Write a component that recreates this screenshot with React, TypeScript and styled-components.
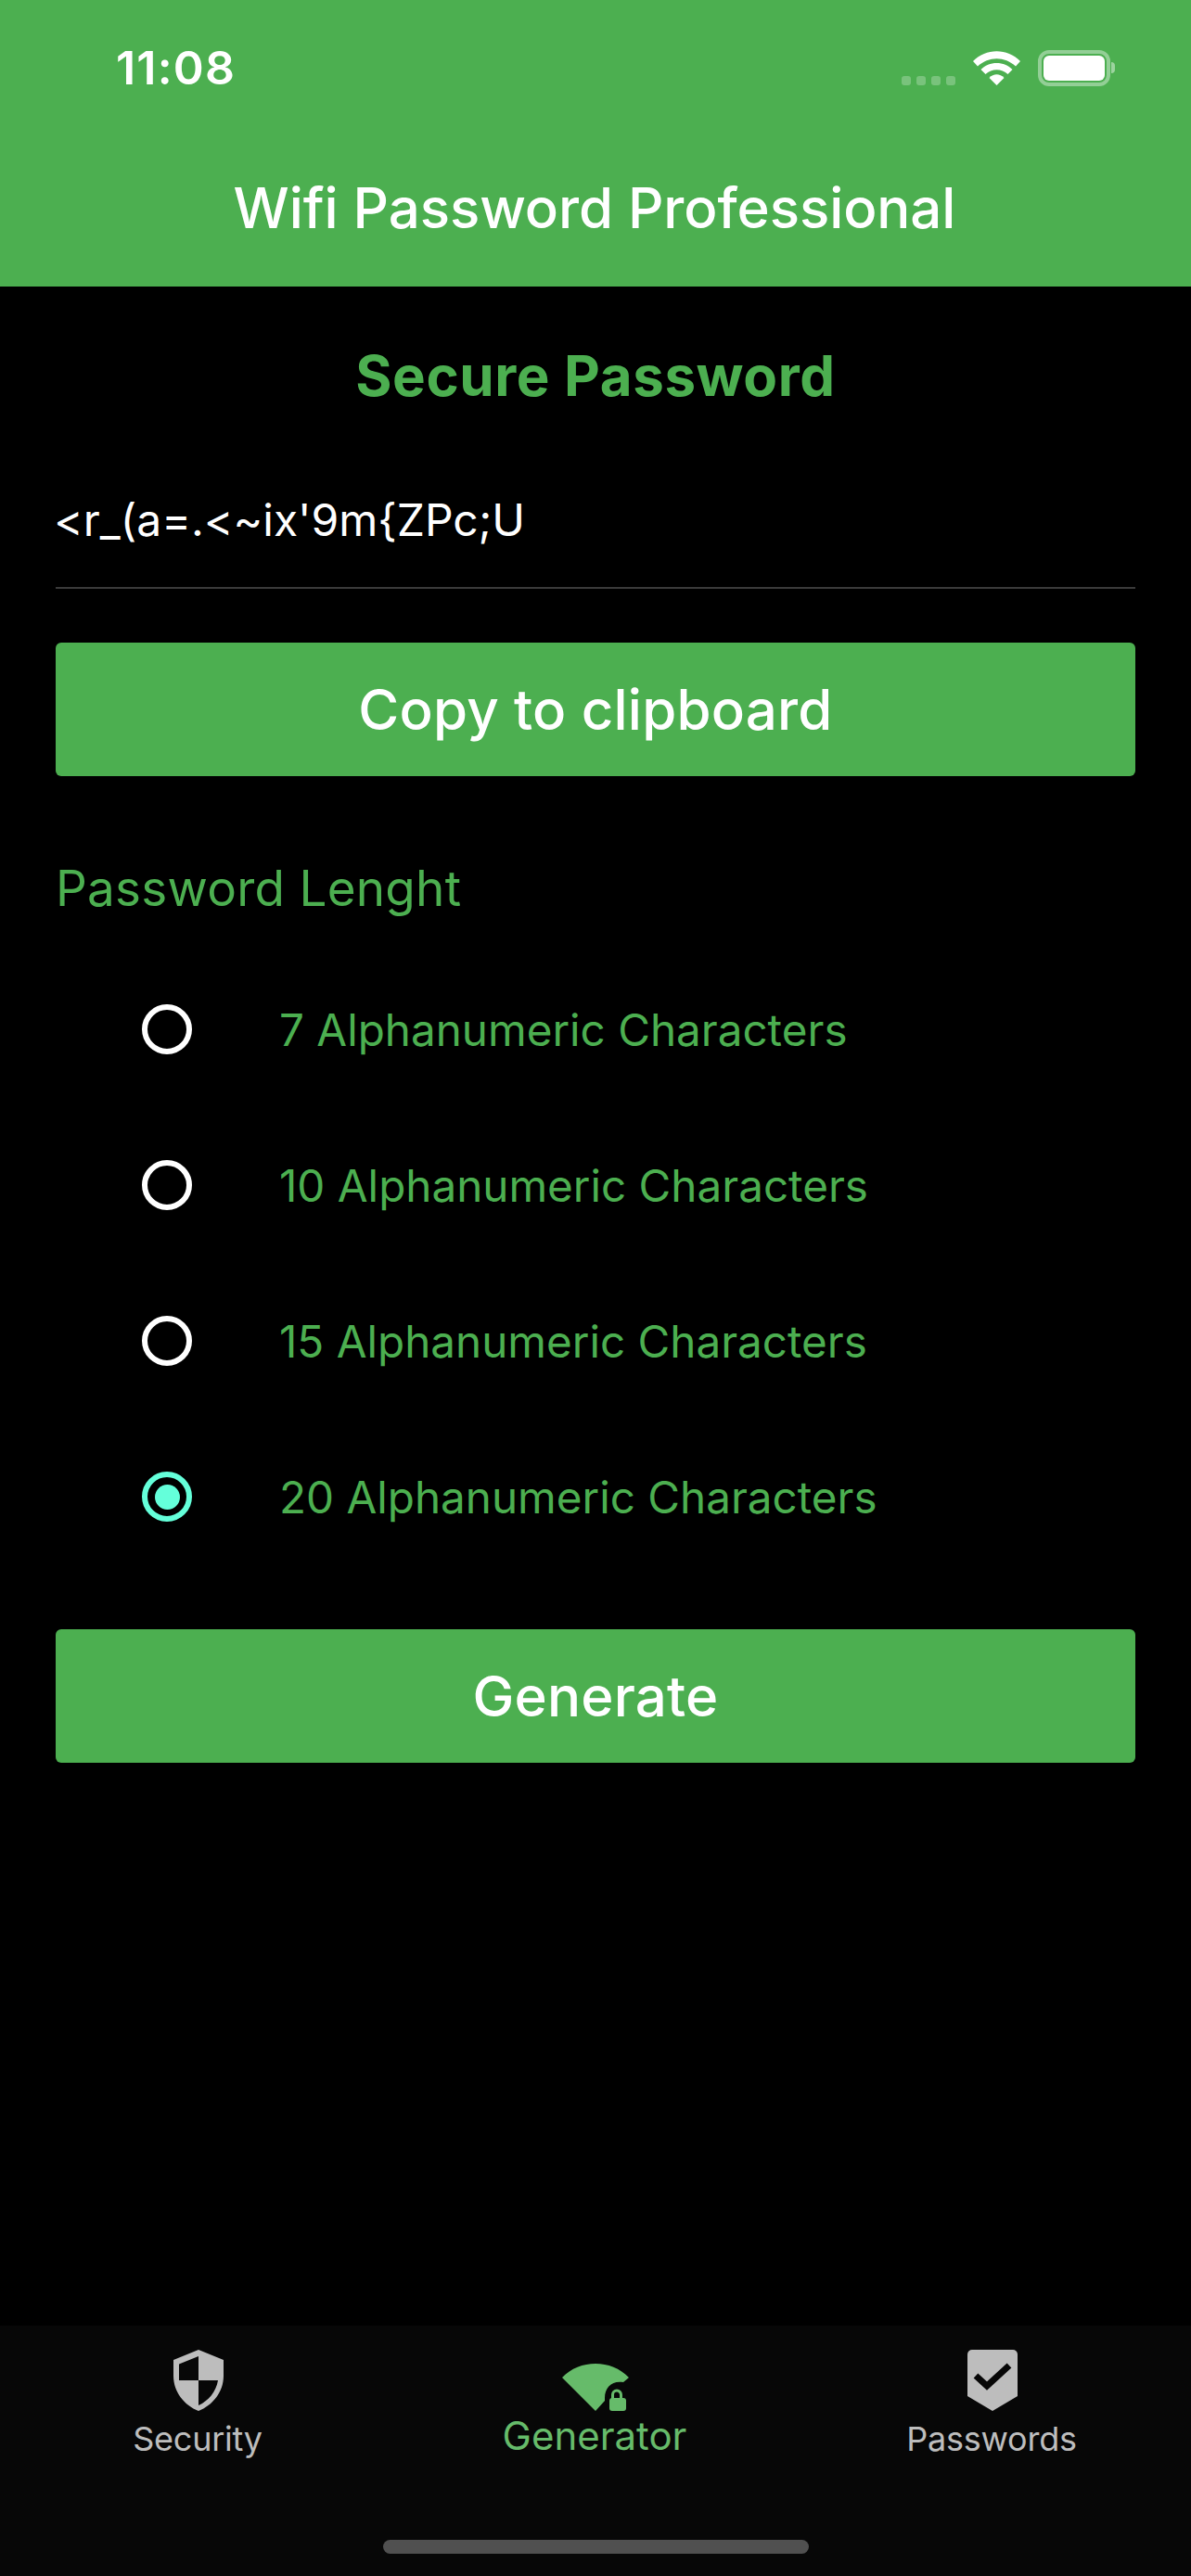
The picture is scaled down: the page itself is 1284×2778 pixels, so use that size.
import React from "react";
import styled, { createGlobalStyle } from "styled-components";

const Global = createGlobalStyle`
  html, body { margin: 0; padding: 0; background: #000; }
  * { box-sizing: border-box; }
  body { font-family: Inter, "Liberation Sans", sans-serif; }
`;

const Page = styled.div`
  width: 1284px;
  height: 2778px;
  background: #000;
  display: flex;
  flex-direction: column;
  overflow: hidden;
`;

const Header = styled.header`
  height: 309px;
  flex: none;
  background: #4caf50;
  display: flex;
  flex-direction: column;
  color: #fff;
`;

const StatusBar = styled.div`
  height: 146px;
  display: flex;
  align-items: center;
  justify-content: space-between;
  padding: 0 82px 0 125px;
`;

const Time = styled.span`
  font-size: 50px;
  font-weight: 600;
  line-height: 1;
  letter-spacing: 1.2px;
`;

const StatusIcons = styled.div`
  display: flex;
  align-items: center;
  position: relative;
`;

const Signal = styled.div`
  display: flex;
  gap: 6px;
  align-self: flex-end;
  margin: 0 19px 1px 0;
`;

const SignalDot = styled.i`
  width: 10px;
  height: 10px;
  border-radius: 3px;
  background: rgba(255, 255, 255, 0.25);
`;

const Battery = styled.div`
  width: 78px;
  height: 39px;
  margin-left: 19px;
  border: 4px solid rgba(255, 255, 255, 0.4);
  border-radius: 12px;
  padding: 2px;
  display: flex;
`;

const BatteryFill = styled.div`
  flex: 1;
  background: #fff;
  border-radius: 6px;
`;

const BatteryTip = styled.div`
  width: 4px;
  height: 12px;
  margin-left: 1px;
  background: rgba(255, 255, 255, 0.45);
  border-radius: 0 4px 4px 0;
`;

const HeaderTitle = styled.h1`
  margin: 0;
  height: 156px;
  padding-right: 2px;
  display: flex;
  align-items: center;
  justify-content: center;
  font-size: 60px;
  font-weight: 500;
  line-height: 1;
  letter-spacing: -0.08px;
`;

const Content = styled.main`
  flex: 1;
  padding: 0 60px;
  display: flex;
  flex-direction: column;
`;

const SectionTitle = styled.h2`
  margin: 0;
  height: 150px;
  padding-top: 41px;
  display: flex;
  align-items: center;
  justify-content: center;
  color: #4caf50;
  font-size: 60px;
  font-weight: 700;
  line-height: 1;
  letter-spacing: 0.6px;
`;

const PasswordField = styled.div`
  height: 176px;
  padding-top: 59px;
  border-bottom: 2px solid #3a3a3a;
  color: #fff;
  font-size: 48px;
  line-height: 86px;
  text-indent: -2px;
`;

const ActionButton = styled.button`
  display: block;
  width: 100%;
  height: 144px;
  border: 0;
  padding: 0;
  border-radius: 6px;
  background: #4caf50;
  color: #fff;
  font-family: inherit;
  font-size: 60px;
  font-weight: 500;
  line-height: 1;
  letter-spacing: 0.2px;
`;

const CopyButton = styled(ActionButton)`
  margin-top: 58px;
`;

const GenerateButton = styled(ActionButton)`
  margin-top: 59px;
`;

const LengthLabel = styled.div`
  margin-top: 88px;
  height: 66px;
  display: flex;
  align-items: center;
  color: #4caf50;
  font-size: 53px;
  line-height: 1;
  letter-spacing: 0.25px;
`;

const Options = styled.div`
  margin-top: 35px;
  display: flex;
  flex-direction: column;
`;

const Option = styled.label`
  height: 168px;
  display: flex;
  align-items: center;
  color: #4caf50;
  font-size: 47.6px;
  padding-left: 93px;
`;

const Radio = styled.span<{ $on?: boolean }>`
  width: 54px;
  height: 54px;
  flex: none;
  margin-right: 94px;
  border-radius: 50%;
  border: 6px solid ${(p) => (p.$on ? "#64ffda" : "#fff")};
  display: flex;
  align-items: center;
  justify-content: center;
`;

const RadioDot = styled.span`
  width: 27px;
  height: 27px;
  border-radius: 50%;
  background: #64ffda;
`;

const TabBar = styled.nav`
  height: 270px;
  flex: none;
  background: #070707;
  position: relative;
  display: grid;
  grid-template-columns: repeat(3, 1fr);
`;

const Tab = styled.div<{ $active?: boolean }>`
  display: flex;
  flex-direction: column;
  align-items: center;
  color: ${(p) => (p.$active ? "#66bb6a" : "#bdbdbd")};
`;

const TabIconSlot = styled.div`
  height: 66px;
  margin-top: 26px;
  display: flex;
  align-items: flex-end;
  justify-content: center;
`;

const TabLabel = styled.span<{ $active?: boolean }>`
  margin-top: ${(p) => (p.$active ? "3px" : "6px")};
  padding-right: 2px;
  font-size: ${(p) => (p.$active ? "42px" : "36px")};
  letter-spacing: ${(p) => (p.$active ? "0" : "-0.25px")};
  line-height: 48px;
`;

const HomeBar = styled.div`
  position: absolute;
  left: 413px;
  bottom: 24px;
  width: 459px;
  height: 15px;
  border-radius: 8px;
  background: #505050;
`;

const options = [
  "7 Alphanumeric Characters",
  "10 Alphanumeric Characters",
  "15 Alphanumeric Characters",
  "20 Alphanumeric Characters",
];

export default function App() {
  return (
    <Page>
      <Global />
      <Header>
        <StatusBar>
          <Time>11:08</Time>
          <StatusIcons>
            <Signal>
              <SignalDot />
              <SignalDot />
              <SignalDot />
              <SignalDot />
            </Signal>
            <svg width="51" height="37" viewBox="0 0 51 37" fill="#fff">
              <path d="M0 11C14-3.5 37-3.5 51 11L46 16.5C34 5.5 17 5.5 5 16.5Z" />
              <path d="M8.5 20C17 10.5 34 10.5 42.5 20L37.5 25C31 18.5 20 18.5 13.5 25Z" />
              <path d="M17.5 29C22 24 29 24 33.5 29L25.5 37Z" />
            </svg>
            <Battery>
              <BatteryFill />
            </Battery>
            <BatteryTip />
          </StatusIcons>
        </StatusBar>
        <HeaderTitle>Wifi Password Professional</HeaderTitle>
      </Header>
      <Content>
        <SectionTitle>Secure Password</SectionTitle>
        <PasswordField>{"<r_(a=.<~ix'9m{ZPc;U"}</PasswordField>
        <CopyButton>Copy to clipboard</CopyButton>
        <LengthLabel>Password Lenght</LengthLabel>
        <Options>
          {options.map((o, i) => (
            <Option key={o}>
              <Radio $on={i === 3}>{i === 3 && <RadioDot />}</Radio>
              {o}
            </Option>
          ))}
        </Options>
        <GenerateButton>Generate</GenerateButton>
      </Content>
      <TabBar>
        <Tab>
          <TabIconSlot>
            <svg width="54" height="66" viewBox="0 0 54 66">
              <path
                fillRule="evenodd"
                fill="#bdbdbd"
                d="M27 0L54 11V28C54 46 42 60 27 66C12 60 0 46 0 28V11ZM27 7L6 15.5V33H27ZM27 33V60C38 55 46 45 48 33Z"
              />
            </svg>
          </TabIconSlot>
          <TabLabel>Security</TabLabel>
        </Tab>
        <Tab $active>
          <TabIconSlot>
            <svg width="72" height="51" viewBox="0 0 72 51" fill="#66bb6a">
              <path d="M0 15C19-5 53-5 72 15L66 20C54 18 46 25 46 37V40L36 51Z" />
              <rect x="51" y="37" width="18" height="14" rx="3" />
              <path d="M54.5 38V33.5a4.5 4.5 0 0 1 9 0V38" fill="none" stroke="#66bb6a" strokeWidth="3" />
            </svg>
          </TabIconSlot>
          <TabLabel $active>Generator</TabLabel>
        </Tab>
        <Tab>
          <TabIconSlot>
            <svg width="54" height="66" viewBox="0 0 54 66">
              <path fill="#bdbdbd" d="M5 0H49A5 5 0 0 1 54 5V50L27 66L0 50V5A5 5 0 0 1 5 0Z" />
              <path d="M9 28L21 39L45 17" fill="none" stroke="#070707" strokeWidth="7" />
            </svg>
          </TabIconSlot>
          <TabLabel>Passwords</TabLabel>
        </Tab>
        <HomeBar />
      </TabBar>
    </Page>
  );
}
